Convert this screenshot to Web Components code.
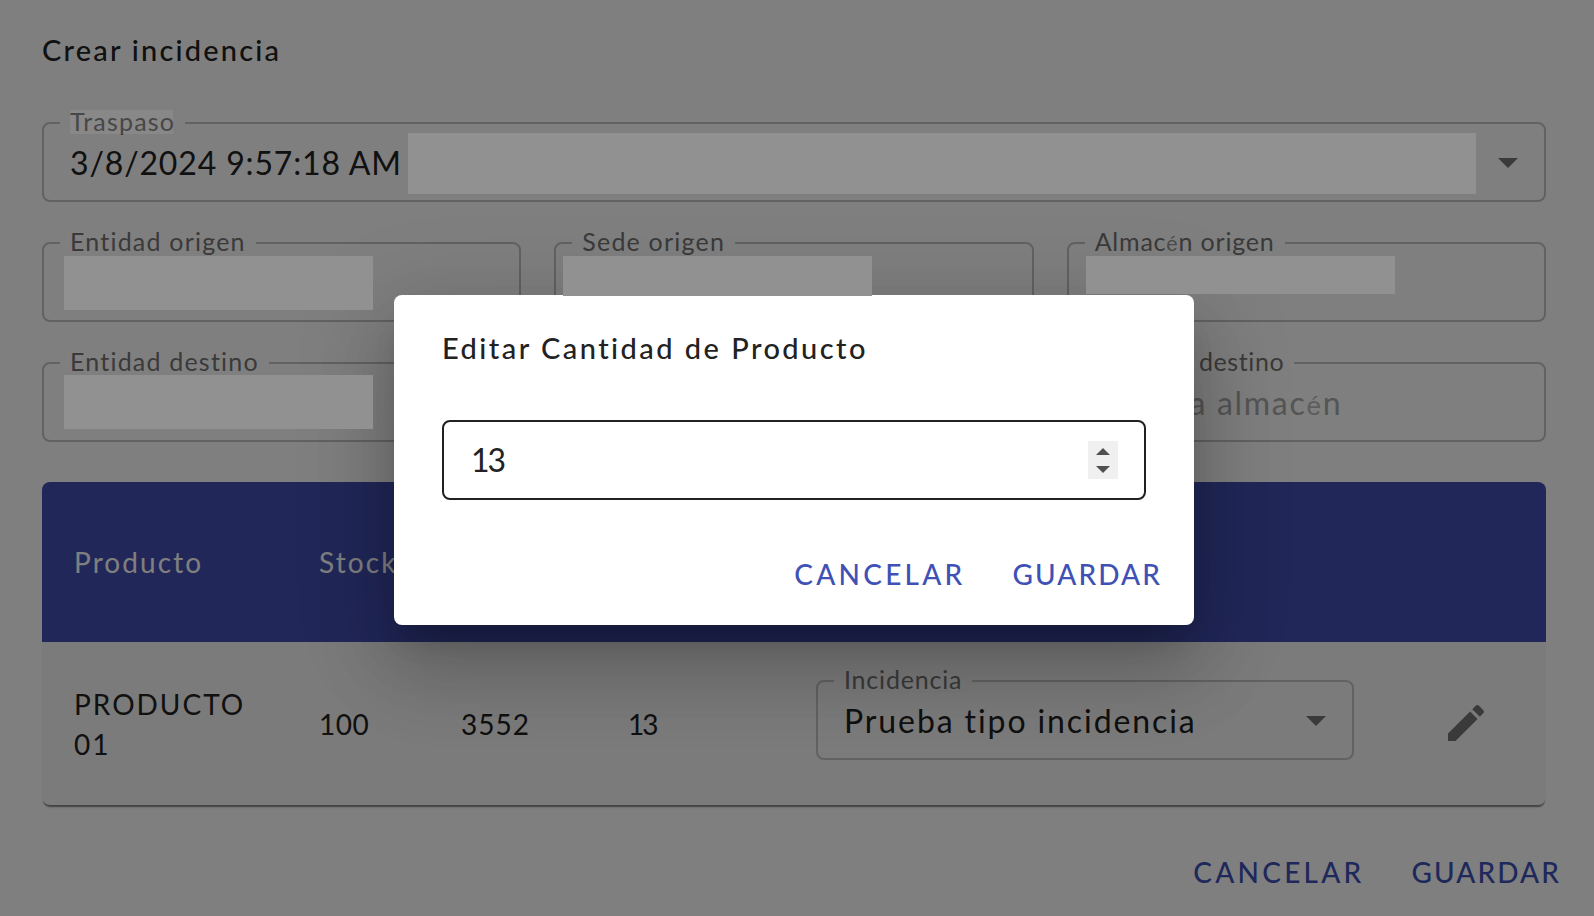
<!doctype html>
<html lang="es">
<head>
<meta charset="utf-8">
<title>Crear incidencia</title>
<style>
  html, body { margin: 0; height: 100%; overflow: hidden; background: #fff; }
  body { font-family: Lato, "Noto Sans", sans-serif; }
</style>
</head>
<body>
<incident-page>
  <outlined-field label="Traspaso" arrow style="--value-spacing:.85px">
    3/8/2024 9:57:18 AM
    <redact-box style="left:366px;top:22px;width:1068px;height:61px"></redact-box>
    <redact-box tint style="left:28px;top:-1px;width:103px;height:24px"></redact-box>
  </outlined-field>
  <field-row>
    <outlined-field label="Entidad origen">
      <redact-box style="left:22px;top:25px;width:309px;height:54px"></redact-box>
    </outlined-field>
    <outlined-field label="Sede origen">
      <redact-box style="left:9px;top:25px;width:309px;height:40px"></redact-box>
    </outlined-field>
    <outlined-field label="Almacén origen" style="--legend-spacing:.8px">
      <redact-box style="left:19px;top:25px;width:309px;height:38px"></redact-box>
    </outlined-field>
  </field-row>
  <field-row>
    <outlined-field label="Entidad destino">
      <redact-box style="left:22px;top:24px;width:309px;height:54px"></redact-box>
    </outlined-field>
    <!-- this one sits fully behind the dialog -->
    <outlined-field></outlined-field>
    <outlined-field label="Almacén destino" placeholder style="--value-spacing:1.7px;--legend-spacing:.6px">Escriba almac<span style="font:.82em/0 'Liberation Sans',sans-serif;color:#bbb">é</span>n</outlined-field>
  </field-row>
  <product-table>
    <span slot="head">Producto</span>
    <span slot="head">Stock</span>
    <table-row>
      <span style="letter-spacing:2px;padding-right:40px">PRODUCTO 01</span>
      <span style="letter-spacing:.5px">100</span>
      <span>3552</span>
      <span style="letter-spacing:-2px">13</span>
      <outlined-field label="Incidencia" arrow style="margin-bottom:20px;--legend-spacing:.8px">Prueba tipo incidencia</outlined-field>
      <edit-icon></edit-icon>
    </table-row>
  </product-table>
  <action-bar slot="footer">
    <text-button style="letter-spacing:3.25px">CANCELAR</text-button>
    <text-button style="letter-spacing:2.1px">GUARDAR</text-button>
  </action-bar>
</incident-page>

<edit-dialog heading="Editar Cantidad de Producto" value="13">
  <action-bar>
    <text-button style="letter-spacing:3.25px">CANCELAR</text-button>
    <text-button style="letter-spacing:2.1px">GUARDAR</text-button>
  </action-bar>
</edit-dialog>

<template id="tpl-page">
  <style>
    :host {
      display: block;
      box-sizing: border-box;
      height: 916px;
      padding: 30px 48px 0 42px;
      background: #fff;
      color: #222;
    }
    h1 {
      margin: 0 0 41px;
      font: 500 29px/40px Lato, "Noto Sans", sans-serif;
      letter-spacing: 2.2px;
    }
    .form { display: flex; flex-direction: column; gap: 29px; }
    .footer { margin: 47px -15px 0 0; }
  </style>
  <h1>Crear incidencia</h1>
  <div class="form"><slot></slot></div>
  <div class="footer"><slot name="footer"></slot></div>
</template>

<template id="tpl-row">
  <style>
    :host {
      display: grid;
      grid-template-columns: repeat(3, 1fr);
      column-gap: 33px;
    }
  </style>
  <slot></slot>
</template>

<template id="tpl-field">
  <style>
    :host {
      display: block;
      position: relative;
      height: 91px;
      font-size: 32px;
      color: #222;
    }
    fieldset {
      box-sizing: border-box;
      height: 100%;
      min-width: 0;
      margin: 0;
      padding: 0 0 0 26px;
      border: 2px solid #c4c4c4;
      border-radius: 8px;
    }
    legend {
      margin-left: -10px;
      padding: 0 10px 4px;
      font-size: 25px;
      line-height: 20px;
      letter-spacing: var(--legend-spacing, 1.2px);
      color: #757575;
      white-space: nowrap;
    }
    .thin {
      font: .82em/0 "Liberation Sans", sans-serif;
      color: #999;
    }
    .value {
      line-height: 40px;
      margin-top: 8px;
      letter-spacing: var(--value-spacing, 1.9px);
      white-space: nowrap;
    }
    :host([placeholder]) .value { color: #aaa; }
    svg {
      display: none;
      position: absolute;
      right: 14px;
      top: 27px;
      width: 48px;
      height: 48px;
      fill: #757575;
    }
    :host([arrow]) svg { display: block; }
  </style>
  <fieldset>
    <legend></legend>
    <div class="value"><slot></slot></div>
  </fieldset>
  <svg viewBox="0 0 24 24"><path d="M7 10l5 5 5-5z"/></svg>
</template>

<template id="tpl-redact">
  <style>
    :host {
      display: block;
      position: absolute;
      z-index: 2;
      background: #919191;
    }
    :host([tint]) { background: rgba(255, 255, 255, .07); }
  </style>
</template>

<template id="tpl-table">
  <style>
    :host {
      display: block;
      margin-top: 11px;
      border-radius: 8px;
      background: #f6f6f6;
      box-shadow: 0 3px 1px -1px rgba(0,0,0,.35), 0 4px 3px -2px rgba(0,0,0,.2);
      --columns: 245px 142px 167px 188px 538px 1fr;
    }
    .head {
      display: grid;
      grid-template-columns: var(--columns);
      align-items: center;
      box-sizing: border-box;
      height: 160px;
      padding-left: 32px;
      border-radius: 8px 8px 0 0;
      background: #424eb0;
      color: #fff;
      font-size: 28px;
      letter-spacing: 2.1px;
    }
  </style>
  <div class="head"><slot name="head"></slot></div>
  <slot></slot>
</template>

<template id="tpl-table-row">
  <style>
    :host {
      display: grid;
      grid-template-columns: var(--columns);
      align-items: center;
      box-sizing: border-box;
      height: 163px;
      padding: 2px 0 1px 32px;
      font-size: 28px;
      line-height: 40px;
      letter-spacing: 1px;
      color: #222;
    }
  </style>
  <slot></slot>
</template>

<template id="tpl-edit-icon">
  <style>
    :host { display: block; width: 48px; height: 48px; margin: -2px 0 0 88px; }
    svg { display: block; fill: #757575; }
  </style>
  <svg width="48" height="48" viewBox="0 0 24 24">
    <path d="M3 17.25V21h3.75L17.81 9.94l-3.75-3.75L3 17.25zM20.71 7.04c.39-.39.39-1.02 0-1.41l-2.34-2.34c-.39-.39-1.02-.39-1.41 0l-1.83 1.83 3.75 3.75 1.83-1.83z"/>
  </svg>
</template>

<template id="tpl-actions">
  <style>
    :host { display: flex; justify-content: flex-end; gap: 47px; }
  </style>
  <slot></slot>
</template>

<template id="tpl-button">
  <style>
    :host {
      display: block;
      font-size: 28px;
      font-weight: 500;
      line-height: 40px;
      color: #3f51b5;
    }
  </style>
  <slot></slot>
</template>

<template id="tpl-dialog">
  <style>
    :host {
      position: absolute;
      inset: 0;
      z-index: 1;
      display: flex;
      align-items: center;
      justify-content: center;
      box-sizing: border-box;
      padding: 4px 6px 0 0;
      background: rgba(0, 0, 0, .5);
    }
    .paper {
      box-sizing: border-box;
      width: 800px;
      height: 330px;
      padding: 33px 32px 0 48px;
      border-radius: 8px;
      background: #fff;
      color: #222;
      box-shadow: 0 22px 30px -14px rgba(0,0,0,.2), 0 48px 76px 6px rgba(0,0,0,.14), 0 18px 92px 16px rgba(0,0,0,.12);
    }
    h2 {
      margin: 0 0 52px;
      font: 500 29px/40px Lato, "Noto Sans", sans-serif;
      letter-spacing: 2.45px;
      white-space: nowrap;
    }
    .input {
      display: flex;
      align-items: center;
      justify-content: space-between;
      box-sizing: border-box;
      width: 704px;
      height: 80px;
      padding: 0 26px 0 27px;
      border: 2px solid #212121;
      border-radius: 8px;
      font-size: 32px;
    }
    .val { letter-spacing: -2px; margin-top: -2px; }
    .spin {
      display: flex;
      flex-direction: column;
      align-items: center;
      justify-content: center;
      gap: 11px;
      width: 30px;
      height: 38px;
      background: #f0f0f0;
    }
    .spin i {
      display: block;
      width: 0;
      border-left: 7px solid transparent;
      border-right: 7px solid transparent;
    }
    .up { border-bottom: 7px solid #505050; }
    .down { border-top: 7px solid #505050; }
    .actions { margin-top: 54px; }
  </style>
  <div class="paper">
    <h2></h2>
    <div class="input"><span class="val"></span><div class="spin"><i class="up"></i><i class="down"></i></div></div>
    <div class="actions"><slot></slot></div>
  </div>
</template>

<script>
  function stamp(el, id) {
    const root = el.attachShadow({ mode: "open" });
    root.appendChild(document.getElementById(id).content.cloneNode(true));
    return root;
  }

  function plain(name, id) {
    customElements.define(name, class extends HTMLElement {
      constructor() {
        super();
        stamp(this, id);
      }
    });
  }

  class OutlinedField extends HTMLElement {
    constructor() {
      super();
      this.root = stamp(this, "tpl-field");
    }
    connectedCallback() {
      const label = this.getAttribute("label") || "";
      // the accented letter falls back to a thinner face in the original
      this.root.querySelector("legend").innerHTML = label.replace("é", '<span class="thin">é</span>');
    }
  }

  class EditDialog extends HTMLElement {
    constructor() {
      super();
      this.root = stamp(this, "tpl-dialog");
    }
    connectedCallback() {
      this.root.querySelector("h2").textContent = this.getAttribute("heading");
      this.root.querySelector(".val").textContent = this.getAttribute("value");
    }
  }

  plain("incident-page", "tpl-page");
  plain("field-row", "tpl-row");
  plain("redact-box", "tpl-redact");
  plain("product-table", "tpl-table");
  plain("table-row", "tpl-table-row");
  plain("edit-icon", "tpl-edit-icon");
  plain("action-bar", "tpl-actions");
  plain("text-button", "tpl-button");
  customElements.define("outlined-field", OutlinedField);
  customElements.define("edit-dialog", EditDialog);
</script>
</body>
</html>
